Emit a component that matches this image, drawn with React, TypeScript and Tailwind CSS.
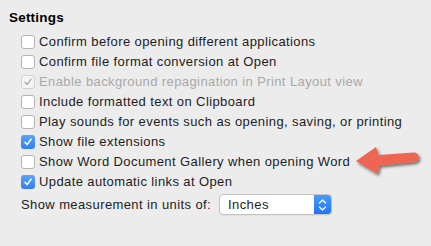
import React from 'react';

type Row = { label: string; checked?: boolean; disabled?: boolean };

const rows: Row[] = [
  { label: 'Confirm before opening different applications' },
  { label: 'Confirm file format conversion at Open' },
  { label: 'Enable background repagination in Print Layout view', checked: true, disabled: true },
  { label: 'Include formatted text on Clipboard' },
  { label: 'Play sounds for events such as opening, saving, or printing' },
  { label: 'Show file extensions', checked: true },
  { label: 'Show Word Document Gallery when opening Word' },
  { label: 'Update automatic links at Open', checked: true },
];

const Check: React.FC<{ checked?: boolean; disabled?: boolean }> = ({ checked, disabled }) => {
  if (checked && !disabled) {
    return (
      <span className="flex h-[14px] w-[14px] shrink-0 items-center justify-center rounded-[3px] bg-gradient-to-b from-[#5aa3fb] to-[#2f7ff4]">
        <svg width="10" height="10" viewBox="0 0 10 10">
          <path d="M2 5.3 L4.1 7.6 L8 2.2" fill="none" stroke="#fff" strokeWidth="1.5" strokeLinecap="round" strokeLinejoin="round" />
        </svg>
      </span>
    );
  }
  return (
    <span
      className={`flex h-[14px] w-[14px] shrink-0 items-center justify-center rounded-[3px] border ${
        disabled ? 'border-[#d2d2d2] bg-[#f4f4f4]' : 'border-[#b5b5b5] bg-white'
      }`}
    >
      {checked && (
        <svg width="10" height="10" viewBox="0 0 10 10">
          <path d="M2 5.3 L4.1 7.6 L8 2.2" fill="none" stroke="#a9a9a9" strokeWidth="1.3" strokeLinecap="round" strokeLinejoin="round" />
        </svg>
      )}
    </span>
  );
};

const Arrow: React.FC = () => (
  <svg className="absolute left-[350px] top-[140px]" width="76" height="42" viewBox="350 140 76 42">
    <defs>
      <filter id="sh" x="-20%" y="-30%" width="150%" height="170%">
        <feDropShadow dx="1.5" dy="2" stdDeviation="1.5" floodColor="#000" floodOpacity="0.55" />
      </filter>
    </defs>
    <path
      d="M356 161 L376 147 L378.5 155 L414 152.5 A4.8 4.8 0 0 1 414 162.2 L379.5 165.5 L377.5 174 Z"
      fill="#ee6553"
      filter="url(#sh)"
    />
  </svg>
);

export default function App() {
  return (
    <div
      className="relative h-[246px] w-[431px] overflow-hidden bg-[#ececec] text-[13px] tracking-[0.4px] text-[#1d1d1d]"
      style={{ fontFamily: '"Liberation Sans", Arial, sans-serif' }}
    >
      <div className="pl-[9px] pt-[10px] text-[13.5px] font-bold leading-[16px] tracking-[0.2px] text-black">Settings</div>
      <div className="mt-[6px] flex flex-col pl-[21px]">
        {rows.map((r) => (
          <div key={r.label} className="flex h-[20px] items-center gap-[4px] whitespace-nowrap">
            <Check checked={r.checked} disabled={r.disabled} />
            <span className={`leading-[16px] ${r.disabled ? 'text-[#a9a9a9]' : ''}`}>{r.label}</span>
          </div>
        ))}
      </div>
      <div className="mt-[2px] flex items-center gap-[8px] pl-[21px]">
        <span className="whitespace-nowrap">Show measurement in units of:</span>
        <div className="flex h-[21px] w-[113px] overflow-hidden rounded-[4px] border border-[#c4c4c4] bg-white shadow-[0_1px_0_rgba(0,0,0,0.05)]">
          <span className="flex flex-1 items-center pl-[8px]">Inches</span>
          <span className="flex w-[17px] flex-col items-center justify-center bg-gradient-to-b from-[#4b9bfc] to-[#1f74f3]">
            <svg width="9" height="14" viewBox="0 0 9 14">
              <path d="M1.5 5 L4.5 2 L7.5 5 M1.5 9 L4.5 12 L7.5 9" fill="none" stroke="#fff" strokeWidth="1.3" strokeLinecap="round" strokeLinejoin="round" />
            </svg>
          </span>
        </div>
      </div>
      <Arrow />
    </div>
  );
}
